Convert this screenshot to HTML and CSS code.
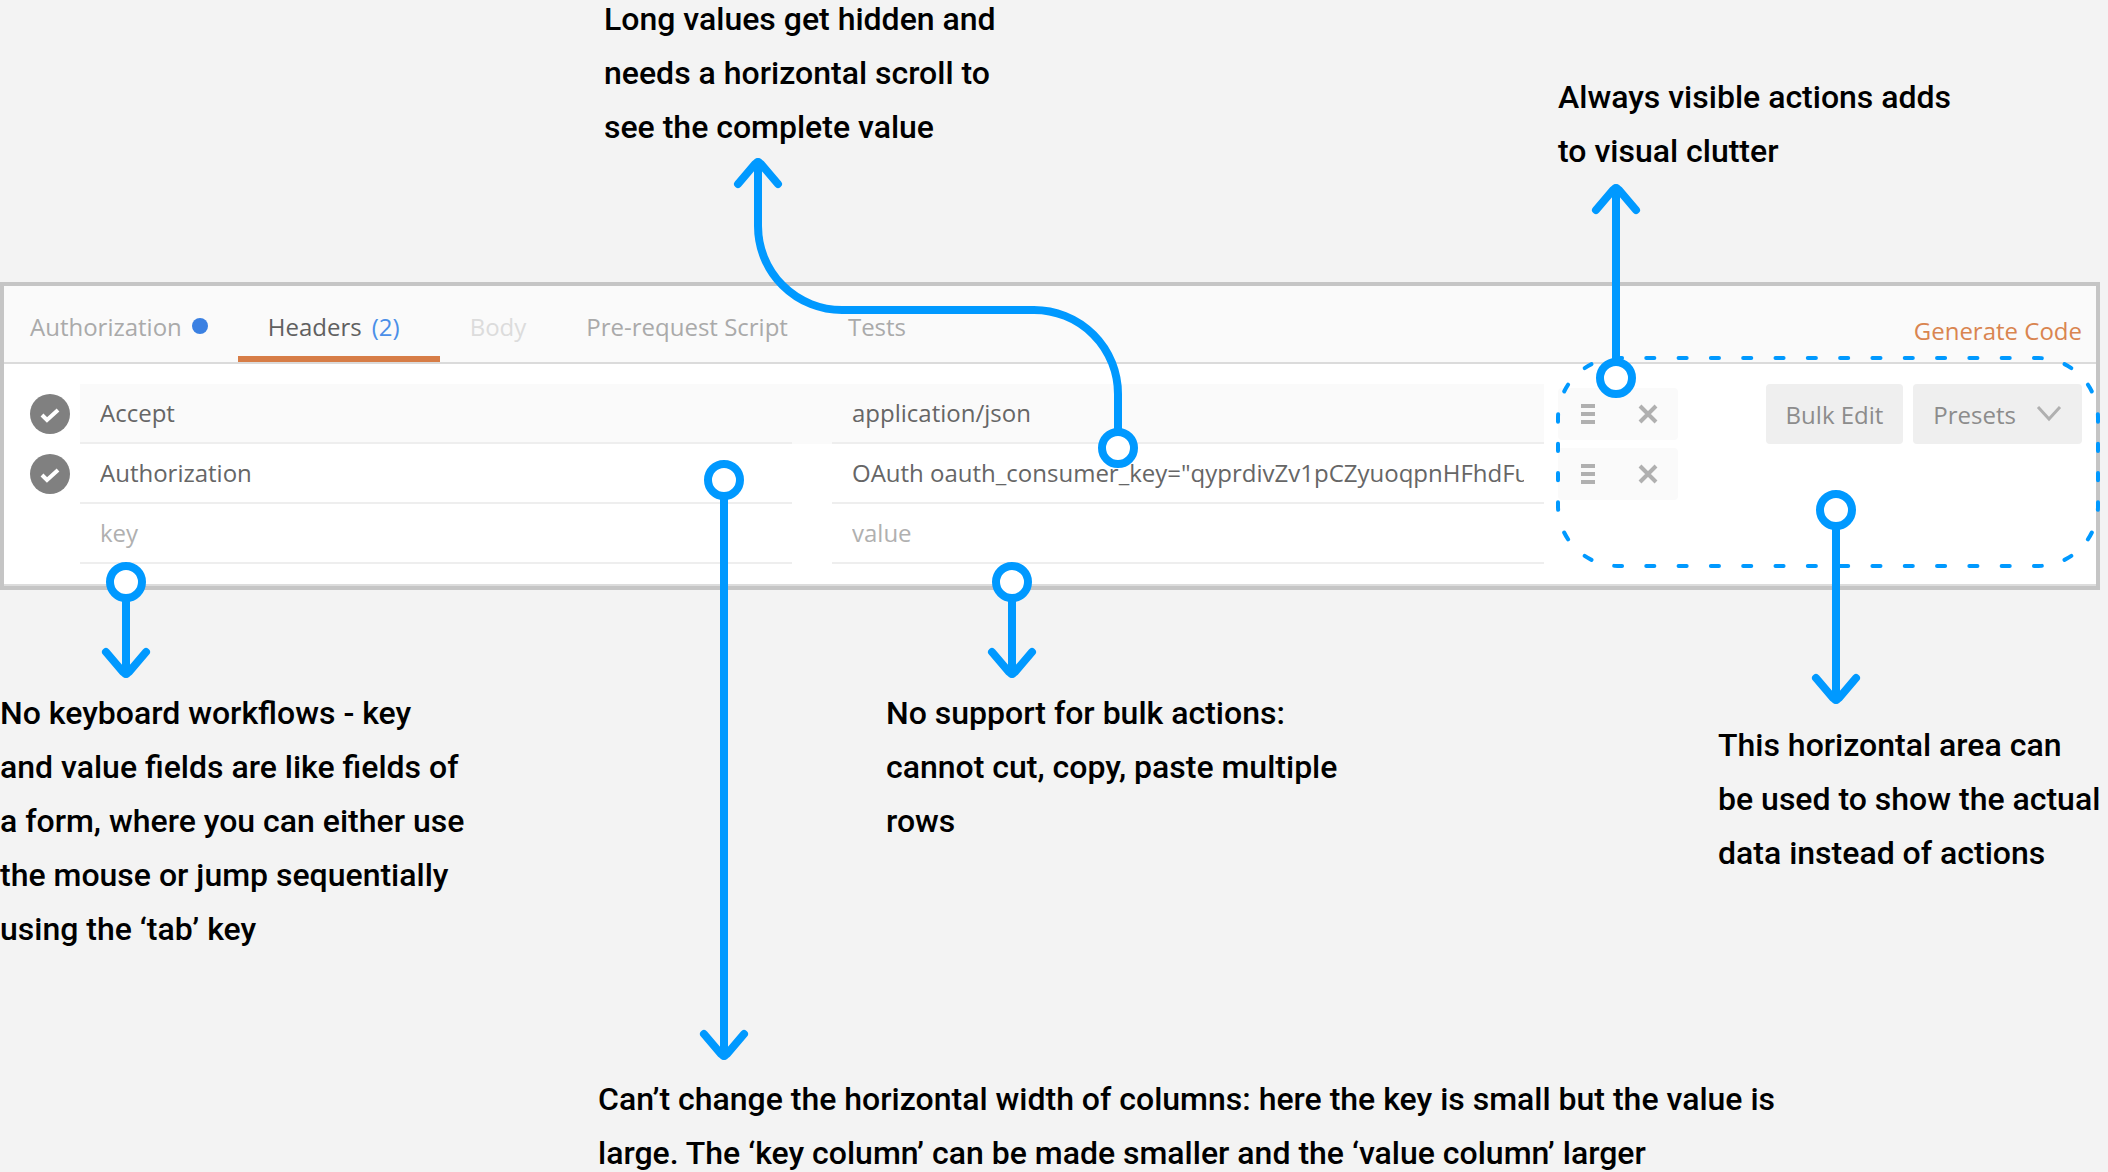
FILE: index.html
```html
<!DOCTYPE html>
<html lang="en">
<head>
<meta charset="utf-8">
<meta name="viewport" content="width=device-width, initial-scale=1">
<title>Header editor review</title>
<link rel="stylesheet" href="styles.css">
</head>
<body>
<main class="board">
  <section class="notes-top">
    <p class="note note-long">Long values get hidden and needs a horizontal scroll to see the complete value</p>
    <p class="note note-visible">Always visible actions adds to visual clutter</p>
  </section>

  <section class="panel">
    <nav class="tabs">
      <button class="tab" type="button">Authorization<span class="dot"></span></button>
      <button class="tab tab-active" type="button">Headers<span class="count">(2)</span></button>
      <button class="tab tab-off" type="button">Body</button>
      <button class="tab" type="button">Pre-request Script</button>
      <button class="tab" type="button">Tests</button>
      <a class="generate" href="#">Generate Code</a>
    </nav>
    <div class="editor">
      <div class="rows">
        <div class="row">
          <label class="check"><input type="checkbox" checked aria-label="Send Accept"><svg viewBox="0 0 40 40"><path d="M12 21L17 26L28 16"/></svg></label>
          <div class="fields fields-hover">
            <input class="field" type="text" value="Accept" aria-label="Key 1">
            <input class="field" type="text" value="application/json" aria-label="Value 1">
          </div>
          <div class="actions">
            <button class="icon" type="button" aria-label="Reorder row 1"><svg class="grip" viewBox="0 0 14 20"><path d="M0 2H14M0 10H14M0 18H14"/></svg></button>
            <button class="icon" type="button" aria-label="Delete row 1"><svg class="cross" viewBox="0 0 20 20"><path d="M2 2L18 18M18 2L2 18"/></svg></button>
          </div>
        </div>
        <div class="row">
          <label class="check"><input type="checkbox" checked aria-label="Send Authorization"><svg viewBox="0 0 40 40"><path d="M12 21L17 26L28 16"/></svg></label>
          <div class="fields">
            <input class="field" type="text" value="Authorization" aria-label="Key 2">
            <input class="field" type="text" value="OAuth oauth_consumer_key=&quot;qyprdivZv1pCZyuoqpnHFhdFu&quot;" aria-label="Value 2">
          </div>
          <div class="actions">
            <button class="icon" type="button" aria-label="Reorder row 2"><svg class="grip" viewBox="0 0 14 20"><path d="M0 2H14M0 10H14M0 18H14"/></svg></button>
            <button class="icon" type="button" aria-label="Delete row 2"><svg class="cross" viewBox="0 0 20 20"><path d="M2 2L18 18M18 2L2 18"/></svg></button>
          </div>
        </div>
        <div class="row">
          <span class="check"></span>
          <div class="fields">
            <input class="field" type="text" placeholder="key" aria-label="New key">
            <input class="field" type="text" placeholder="value" aria-label="New value">
          </div>
        </div>
      </div>
      <div class="tools">
        <button class="tool" type="button">Bulk Edit</button>
        <button class="tool" type="button">Presets<svg class="chevron" viewBox="0 0 24 16"><path d="M1 1L12 13L23 1"/></svg></button>
      </div>
    </div>
  </section>

  <section class="notes-mid">
    <p class="note note-keyboard">No keyboard workflows - key and value fields are like fields of a form, where you can either use the mouse or jump sequentially using the ‘tab’ key</p>
    <p class="note note-bulk">No support for bulk actions: cannot cut, copy, paste multiple rows</p>
    <p class="note note-area">This horizontal area can be used to show the actual data instead of actions</p>
  </section>

  <p class="note note-width">Can’t change the horizontal width of columns: here the key is small but the value is large. The ‘key column’ can be made smaller and the ‘value column’ larger</p>

  <svg class="overlay" width="2108" height="1172" viewBox="0 0 2108 1172" aria-hidden="true">
    <defs>
      <path id="head" d="M-20 -22L-3 -2Q0 1 3 -2L20 -22"/>
    </defs>
    <g class="dashes">
      <path pathLength="1300" d="M1618 358H2038"/>
      <path pathLength="300" d="M2038 358A60 60 0 0 1 2098 418"/>
      <path pathLength="300" d="M2098 418V506"/>
      <path pathLength="300" d="M2098 506A60 60 0 0 1 2038 566"/>
      <path pathLength="1300" d="M2038 566H1618"/>
      <path pathLength="300" d="M1618 566A60 60 0 0 1 1558 506"/>
      <path pathLength="300" d="M1558 506V418"/>
      <path pathLength="300" d="M1558 418A60 60 0 0 1 1618 358"/>
    </g>
    <g class="arrows">
      <path d="M758 162V226A84 84 0 0 0 842 310H1034A84 84 0 0 1 1118 394V448"/>
      <use href="#head" transform="translate(758 162) rotate(180)"/>
      <circle cx="1118" cy="448" r="16"/>
      <path d="M1616 188V378"/>
      <use href="#head" transform="translate(1616 188) rotate(180)"/>
      <circle cx="1616" cy="378" r="16"/>
      <path d="M126 582V674"/>
      <use href="#head" transform="translate(126 674)"/>
      <circle cx="126" cy="582" r="16"/>
      <path d="M724 480V1056"/>
      <use href="#head" transform="translate(724 1056)"/>
      <circle cx="724" cy="480" r="16"/>
      <path d="M1012 582V674"/>
      <use href="#head" transform="translate(1012 674)"/>
      <circle cx="1012" cy="582" r="16"/>
      <path d="M1836 510V700"/>
      <use href="#head" transform="translate(1836 700)"/>
      <circle cx="1836" cy="510" r="16"/>
    </g>
  </svg>
</main>
</body>
</html>
```
FILE: styles.css
```css
* {
  box-sizing: border-box;
}

body {
  margin: 0;
  background: #f3f3f3;
  color: #000;
  font-family: "Open Sans", "Noto Sans", sans-serif;
  font-size: 24px;
}

button,
input {
  margin: 0;
  border: 0;
  background: none;
  color: inherit;
  font: inherit;
}

.board {
  position: relative;
  overflow: hidden;
}

/* Notes */

.note {
  margin: 0;
  font-family: Roboto, sans-serif;
  font-size: 32px;
  font-weight: 500;
  line-height: 54px;
}

.notes-top {
  display: flex;
  align-items: flex-start;
  justify-content: space-between;
  min-height: 282px;
  padding-left: 604px;
  padding-right: 140px;
}

.note-long {
  width: 410px;
  margin-top: -8px;
}

.note-visible {
  width: 410px;
  margin-top: 70px;
}

.notes-mid {
  display: grid;
  grid-template-columns: 1fr 832px 384px;
  align-items: start;
  min-height: 482px;
  padding: 96px 6px 0 0;
}

.note-keyboard {
  max-width: 468px;
}

.note-bulk {
  max-width: 460px;
}

.note-area {
  margin-top: 32px;
}

.note-width {
  width: 1200px;
  margin-left: 598px;
  height: 100px;
}

/* Header editor */

.panel {
  margin-right: 8px;
  border: 4px solid #c5c5c5;
  background: #fff;
}

.tabs {
  display: flex;
  align-items: stretch;
  height: 78px;
  padding-right: 14px;
  border-bottom: 2px solid #dbdbdb;
  background: #fafafa;
}

.tab {
  display: flex;
  align-items: center;
  padding: 10px 30px 0;
  border-bottom: 6px solid transparent;
  color: #aaa;
  white-space: nowrap;
}

.tab:first-child {
  padding-left: 26px;
}

.tab-active {
  padding-right: 40px;
  border-bottom-color: #d77d47;
  color: #606060;
}

.tab-off {
  color: #dcdcdc;
}

.dot {
  width: 16px;
  height: 16px;
  margin-left: 10px;
  border-radius: 50%;
  background: #3a80e2;
}

.count {
  margin-left: 10px;
  color: #4a8fe8;
}

.generate {
  align-self: center;
  margin-left: auto;
  padding-top: 12px;
  color: #d98550;
  text-decoration: none;
}

.editor {
  display: flex;
  justify-content: space-between;
  padding: 20px 14px 20px 26px;
  border-bottom: 2px solid #dcdcdc;
}

.rows {
  flex: 0 1 1648px;
}

.row {
  display: grid;
  grid-template-columns: 40px 1fr 120px;
  align-items: center;
  height: 60px;
}

.check {
  display: grid;
  width: 40px;
  height: 40px;
}

.check input,
.check svg {
  grid-area: 1 / 1;
  width: 40px;
  height: 40px;
}

.check input {
  appearance: none;
  border-radius: 50%;
  background: #808080;
}

.check svg {
  fill: none;
  stroke: #fff;
  stroke-width: 4;
  pointer-events: none;
}

.fields {
  display: grid;
  grid-template-columns: 1fr 1fr;
  gap: 40px;
  margin: 0 14px 0 10px;
}

.fields-hover {
  background: #fafafa;
}

.field {
  width: 100%;
  height: 60px;
  padding: 0 20px 2px;
  border-bottom: 2px solid #eee;
  color: #666;
}

.field::placeholder {
  color: #b0b0b0;
  opacity: 1;
}

.actions {
  display: flex;
  height: 52px;
  border-radius: 4px;
  background: #fafafa;
}

.icon {
  display: grid;
  flex: 1;
  place-items: center;
  padding: 0;
}

.icon svg,
.chevron {
  height: 20px;
  fill: none;
  stroke: #b0b0b0;
  stroke-width: 4;
}

.grip {
  width: 14px;
}

.cross {
  width: 20px;
}

.tools {
  display: flex;
  align-items: flex-start;
  gap: 10px;
}

.tool {
  display: flex;
  align-items: center;
  height: 60px;
  padding: 0 20px;
  border-radius: 4px;
  background: #efefef;
  color: #8c8c8c;
  white-space: nowrap;
}

.tools .chevron {
  width: 26px;
  height: 16px;
  margin-left: 20px;
  stroke-width: 3;
}

/* Arrows drawn over the editor */

.overlay {
  position: absolute;
  top: 0;
  left: 0;
  pointer-events: none;
}

.arrows {
  fill: none;
  stroke: #09f;
  stroke-width: 8;
  stroke-linecap: round;
  stroke-linejoin: round;
}

.arrows circle {
  fill: #fff;
}

.dashes {
  fill: none;
  stroke: #09f;
  stroke-width: 4;
  stroke-linecap: round;
  stroke-dasharray: 25 75;
  stroke-dashoffset: 12.5;
}
```
